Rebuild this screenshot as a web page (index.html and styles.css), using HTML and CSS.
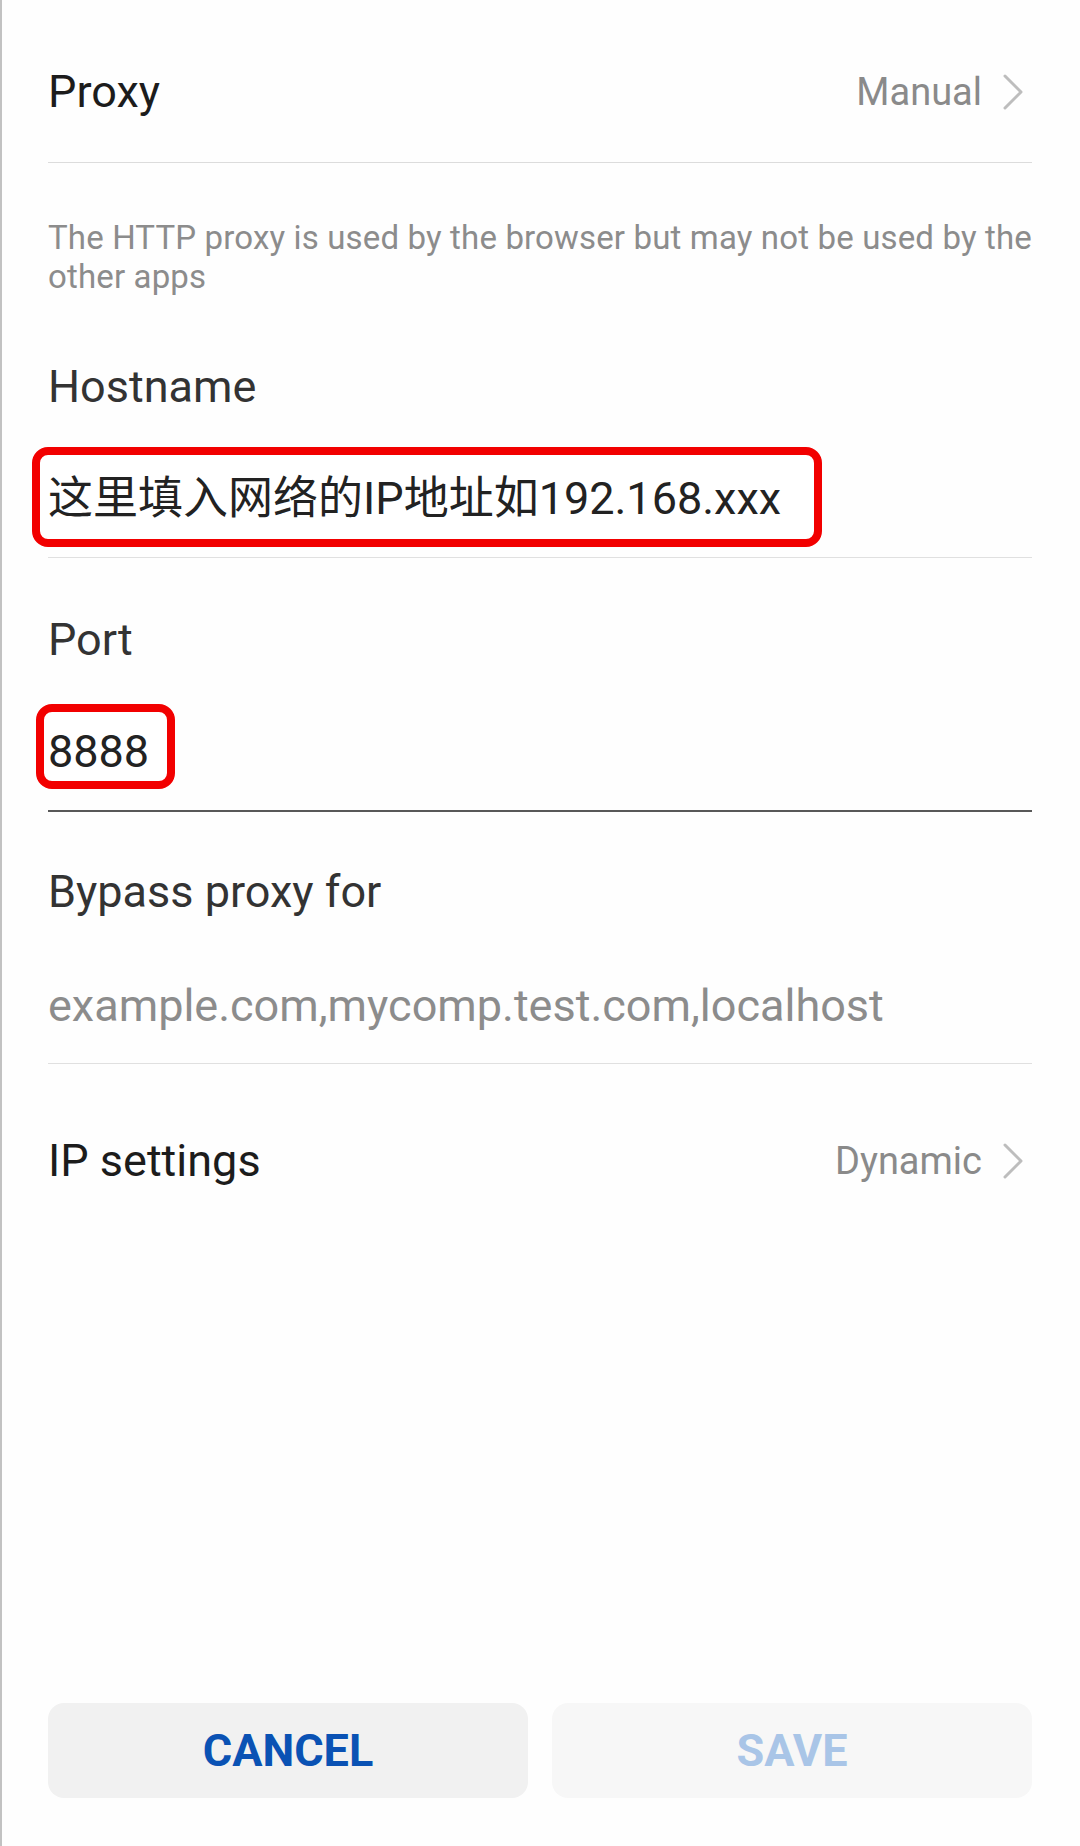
FILE: index.html
```html
<!DOCTYPE html>
<html lang="en">
<head>
<meta charset="utf-8">
<title>Proxy settings</title>
<link rel="stylesheet" href="styles.css">
</head>
<body>
<div class="screen">
  <div class="nav-row nav-row-proxy">
    <span class="nav-label">Proxy</span>
    <span class="nav-value">Manual<svg class="chev" viewBox="0 0 22 36" width="22" height="36"><polyline points="3,2 19,18 3,34" fill="none" stroke="#bdbdbd" stroke-width="3" stroke-linecap="round" stroke-linejoin="round"/></svg></span>
  </div>

  <p class="hint">The HTTP proxy is used by the browser but may not be used by the other apps</p>

  <div class="field-label label-host">Hostname</div>
  <div class="field-input input-host">
    <span class="mark mark-host">这里填入网络的IP地址如192.168.xxx</span>
  </div>

  <div class="field-label label-port">Port</div>
  <div class="field-input input-port">
    <span class="mark mark-port">8888</span>
  </div>

  <div class="field-label label-bypass">Bypass proxy for</div>
  <div class="field-input input-bypass">
    <span class="placeholder">example.com,mycomp.test.com,localhost</span>
  </div>

  <div class="nav-row nav-row-ip">
    <span class="nav-label">IP settings</span>
    <span class="nav-value">Dynamic<svg class="chev" viewBox="0 0 22 36" width="22" height="36"><polyline points="3,2 19,18 3,34" fill="none" stroke="#bdbdbd" stroke-width="3" stroke-linecap="round" stroke-linejoin="round"/></svg></span>
  </div>

  <div class="actions">
    <button class="btn btn-cancel">CANCEL</button>
    <button class="btn btn-save">SAVE</button>
  </div>
</div>
</body>
</html>
```

FILE: styles.css
```css
* {
  box-sizing: border-box;
}

html, body {
  margin: 0;
  padding: 0;
  background: #ffffff;
}

body {
  font-family: Roboto, "Noto Sans CJK SC", "Noto Sans", sans-serif;
  color: #1c1c1c;
}

.screen {
  height: 1846px;
  border-left: 2px solid #c2c2c2;
  padding: 0 48px 48px 46px;
  display: flex;
  flex-direction: column;
  background: #fefefe;
}

/* navigation rows (Proxy / IP settings) */
.nav-row {
  display: flex;
  align-items: center;
  justify-content: space-between;
  line-height: 60px;
  padding-right: 8px;
}

.nav-row-proxy {
  padding-top: 62px;
  padding-bottom: 40px;
  border-bottom: 1px solid #dcdcdc;
}

.nav-row-ip {
  margin-top: 67px;
}

.nav-label {
  font-size: 45px;
  color: #1c1c1c;
}

.nav-value {
  display: flex;
  align-items: center;
  gap: 20px;
  font-size: 38px;
  color: #8a8a8a;
}

.chev {
  display: block;
}

/* helper text */
.hint {
  margin: 55px -30px 0 0;
  font-size: 33px;
  line-height: 39px;
  letter-spacing: 0.15px;
  color: #8c8c8c;
}

/* field labels */
.field-label {
  font-size: 45px;
  line-height: 60px;
  color: #333333;
}

.label-host {
  margin-top: 61px;
}

.label-port {
  margin-top: 52px;
}

.label-bypass {
  margin-top: 50px;
}

/* field inputs */
.field-input {
  display: flex;
  align-items: flex-start;
  font-size: 45px;
  color: #222222;
}

.input-host {
  padding-top: 30px;
  padding-bottom: 10px;
  border-bottom: 1px solid #e0e0e0;
}

.input-port {
  padding-top: 34px;
  padding-bottom: 21px;
  border-bottom: 2px solid #585858;
}

.input-bypass {
  padding-top: 54px;
  padding-bottom: 27px;
  border-bottom: 1px solid #e0e0e0;
  line-height: 60px;
}

.placeholder {
  color: #8c8c8c;
}

/* red annotation boxes */
.mark {
  display: block;
  border: 8px solid #f20000;
  border-radius: 16px;
  background: #ffffff;
  white-space: nowrap;
}

.mark-host {
  margin-left: -16px;
  width: 790px;
  padding: 4px 0 0 8px;
  line-height: 80px;
}

.mark-port {
  margin-left: -12px;
  width: 139px;
  padding: 11px 0 0 4px;
  line-height: 58px;
}

/* bottom buttons */
.actions {
  margin-top: auto;
  display: flex;
  gap: 24px;
}

.btn {
  flex: 1;
  height: 95px;
  border: none;
  border-radius: 16px;
  font-family: Roboto, "Noto Sans", sans-serif;
  font-size: 45px;
  font-weight: 700;
  padding: 0;
}

.btn-cancel {
  background: #f1f1f1;
  color: #0a52b4;
}

.btn-save {
  background: #f7f7f7;
  color: #a9c5e7;
}
```
